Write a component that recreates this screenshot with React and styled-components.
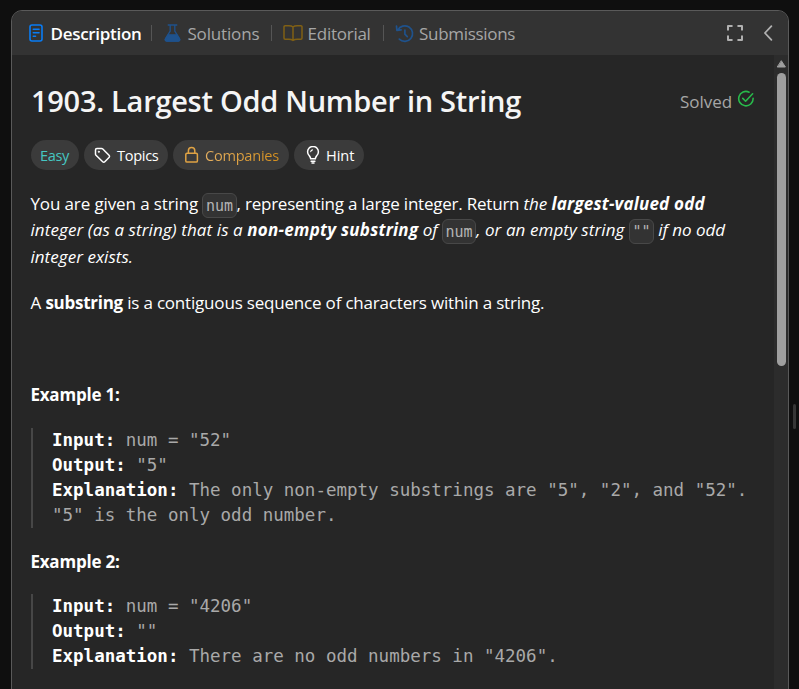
import React from 'react';
import styled, { createGlobalStyle } from 'styled-components';

const GlobalStyle = createGlobalStyle`
  * { box-sizing: border-box; }
  html, body { margin: 0; height: 689px; overflow: hidden; background: #0f0f0f; }
  body { font-family: "Open Sans", "Noto Sans", sans-serif; font-size: 17px; color: #fff; }
`;

const Page = styled.div`
  display: flex;
  width: 799px;
  height: 689px;
  padding: 10px 0 0 11px;
  overflow: hidden;
`;

const Panel = styled.section`
  display: flex;
  flex-direction: column;
  width: 778px;
  height: 700px;
  flex: none;
  border: 1px solid #5a5a5a;
  border-radius: 11px;
  background: #262626;
  overflow: hidden;
`;

const Header = styled.header`
  display: flex;
  align-items: center;
  flex: none;
  height: 44px;
  padding: 0 13px 0 15px;
  background: #333;
`;

const Tab = styled.div`
  display: flex;
  align-items: center;
  flex: none;
  width: ${(p) => p.$width}px;
  height: 44px;
  gap: ${(p) => p.$gap}px;
  color: ${(p) => (p.$active ? '#fff' : '#a6a6a6')};
  font-weight: ${(p) => (p.$active ? 600 : 400)};
  letter-spacing: ${(p) => p.$track}px;
  white-space: nowrap;
`;

const Divider = styled.span`
  flex: none;
  width: 1px;
  height: 16px;
  margin-right: ${(p) => p.$after}px;
  background: #555;
`;

const HeaderActions = styled.div`
  display: flex;
  align-items: center;
  gap: 19px;
  margin-left: auto;
`;

const Icon = styled.svg`
  display: block;
  flex: none;
  fill: none;
  stroke: currentColor;
  stroke-linecap: round;
  stroke-linejoin: round;
  color: ${(p) => p.$color || 'currentColor'};
`;

const Body = styled.div`
  display: flex;
  flex: 1;
  min-height: 0;
`;

const Content = styled.main`
  width: 762px;
  padding: 25px 19px 0 19px;
`;

const TitleRow = styled.div`
  display: flex;
  align-items: center;
  justify-content: space-between;
  height: 41px;
`;

const Title = styled.h1`
  margin: 0;
  color: #f5f5f5;
  font-size: 29px;
  font-weight: 600;
  line-height: 41px;
  letter-spacing: -0.28px;
  white-space: nowrap;
`;

const Status = styled.div`
  display: flex;
  align-items: center;
  gap: 5px;
  padding-top: 1px;
  color: #a6a6a6;
  letter-spacing: -0.05px;
`;

const StatusMark = styled.span`
  margin-bottom: 4px;
`;

const Pills = styled.div`
  display: flex;
  gap: 5px;
  margin-top: 19px;
`;

const Pill = styled.div`
  display: flex;
  align-items: center;
  width: ${(p) => p.$width}px;
  height: 30px;
  padding-left: ${(p) => p.$inset || 10}px;
  gap: ${(p) => p.$gap || 0}px;
  border-radius: 15px;
  background: #3b3b3b;
  color: ${(p) => p.$color || '#fff'};
  font-size: 14.6px;
  letter-spacing: ${(p) => p.$track || 0}px;
  white-space: nowrap;
`;

const GoldText = styled.span`
  background: linear-gradient(90deg, #e5b061, #d48f1d);
  background-clip: text;
  color: transparent;
`;

const Paragraph = styled.p`
  margin: ${(p) => p.$top}px 0 0 -0.6px;
  height: ${(p) => p.$height || 26}px;
  line-height: 26.25px;
  white-space: nowrap;
`;

const Run = styled.span`
  letter-spacing: ${(p) => p.$track}px;
  font-weight: ${(p) => (p.$bold ? 700 : 400)};
  font-style: ${(p) => (p.$italic ? 'italic' : 'normal')};
  white-space: pre;
`;

const Code = styled.code`
  display: inline-block;
  height: 25px;
  margin: -4px 0 -5px;
  padding: 0 2.5px;
  border: 1px solid #484848;
  border-radius: 6px;
  background: #333;
  color: #b3b3b3;
  font: 15px/24px "DejaVu Sans Mono", monospace;
  vertical-align: -1px;
`;

const Example = styled.div`
  margin: ${(p) => p.$top}px 0 0;
  padding-left: 19px;
  border-left: 2px solid #474747;
  color: #a9a9a9;
  font: 17.5px/25px "DejaVu Sans Mono", monospace;
`;

const Line = styled.div`
  height: 25px;
  white-space: pre;
`;

const Label = styled.strong`
  color: #fff;
  font-weight: 700;
`;

const Scrollbar = styled.div`
  display: flex;
  flex-direction: column;
  align-items: center;
  width: 14px;
  padding-top: 5px;
  background: #2c2c2c;
`;

const Thumb = styled.div`
  width: 9px;
  height: 293px;
  margin-top: 5px;
  border-radius: 5px;
  background: #9f9f9f;
`;

const ResizeHandle = styled.div`
  align-self: flex-start;
  width: 3px;
  height: 25px;
  margin: 394px 0 0 4px;
  border-radius: 2px;
  background: #363636;
`;

function Description() {
  return (
    <>
      <Paragraph $top={21} $height={79}>
        <Run $track={-0.115}>You are given a string </Run>
        <Code>num</Code>
        <Run $track={-0.223}>, representing a large integer. Return </Run>
        <Run $italic $track={-0.06}>the </Run>
        <Run $italic $bold $track={0.19}>largest-valued odd</Run>
        <br />
        <Run $italic $track={0.1}>integer (as a string) that is a </Run>
        <Run $italic $bold $track={0.25}>non-empty substring</Run>
        <Run $italic $track={0}> of </Run>
        <Code>num</Code>
        <Run $italic $track={0.08}>, or an empty string </Run>
        <Code>""</Code>
        <Run $italic $track={-0.04}> if no odd</Run>
        <br />
        <Run $italic $track={0.05}>integer exists.</Run>
      </Paragraph>
      <Paragraph $top={20}>
        <Run $track={-0.1}>A </Run>
        <Run $bold $track={-0.26}>substring</Run>
        <Run $track={-0.19}> is a contiguous sequence of characters within a string.</Run>
      </Paragraph>
    </>
  );
}

function ExampleLine({ label, children }) {
  return (
    <Line>
      {label && <Label>{label}</Label>}
      {children}
    </Line>
  );
}

export default function App() {
  return (
    <>
      <GlobalStyle />
      <Page>
        <Panel>
          <Header>
            <Tab $active $width={124} $gap={5.5} $track={-0.29}>
              <Icon width="18" height="18" viewBox="0 0 18 18" $color="#087cf5" strokeWidth="1.6">
                <rect x="3" y="1" width="12" height="16" rx="2" />
                <path d="M6.2 5.3h5.9M6.2 8.8h5.9M6.2 12.3h2.4" strokeWidth="1.4" />
              </Icon>
              Description
            </Tab>
            <Divider $after={12} />
            <Tab $width={107} $gap={6.4} $track={-0.15}>
              <Icon width="17" height="18" viewBox="0 0 17 18" $color="#1f528c" strokeWidth="1.3">
                <path d="M4.2 1h8.6M6.2 1v6.2L1.5 14.5c-.8 1.3 0 2.5 1.3 2.5h11.4c1.3 0 2.1-1.2 1.3-2.5L10.8 7.2V1" />
                <path d="M4.1 10.8h8.8l2.6 4.2c.6 1-.1 2-1.3 2H2.8c-1.2 0-1.9-1-1.3-2z" fill="currentColor" />
              </Icon>
              Solutions
            </Tab>
            <Divider $after={11} />
            <Tab $width={100} $gap={4.6} $track={-0.26}>
              <Icon width="20" height="18" viewBox="0 0 20 18" $color="#806015" strokeWidth="1.5">
                <path d="M10 3v12.2M10 3C8.8 2 7.4 1.8 5.8 1.8H2.1A1.1 1.1 0 0 0 1 2.9v11.2c0 .6.5 1.1 1.1 1.1h3.7c1.8 0 2.8.2 4.2 1.2 1.4-1 2.4-1.2 4.2-1.2h3.7c.6 0 1.1-.5 1.1-1.1V2.9c0-.6-.5-1.1-1.1-1.1h-3.7C12.6 1.8 11.2 2 10 3z" />
              </Icon>
              Editorial
            </Tab>
            <Divider $after={11} />
            <Tab $width={123} $gap={5} $track={-0.3}>
              <Icon width="19" height="19" viewBox="0 0 19 19" $color="#1f528c" strokeWidth="1.7">
                <path d="M2.8 6.1A7.8 7.8 0 1 1 4.3 15.2M1.5 2.1l.4 4.2 4.2-.4M9.9 6v4.2l2.4 2.4" />
              </Icon>
              Submissions
            </Tab>
            <HeaderActions>
              <Icon width="18" height="18" viewBox="0 0 18 18" $color="#b0b0b0" strokeWidth="2" strokeLinejoin="miter">
                <path d="M2 5.8V2h3.8M12.2 2H16v3.8M16 12.2V16h-3.8M5.8 16H2v-3.8" />
              </Icon>
              <Icon width="12" height="18" viewBox="0 0 12 18" $color="#b0b0b0" strokeWidth="1.8">
                <path d="M8.4 2.2 1.9 9 8.4 15.8" />
              </Icon>
            </HeaderActions>
          </Header>
          <Body>
            <Content>
              <TitleRow>
                <Title>1903. Largest Odd Number in String</Title>
                <Status>
                  Solved
                  <StatusMark>
                    <Icon width="18" height="18" viewBox="0 0 18 18" $color="#28b94b" strokeWidth="1.6">
                      <path d="M12.1 2.2A7.2 7.2 0 1 0 16.1 8.4M5.8 8.4l2.8 2.8 7-7.4" />
                    </Icon>
                  </StatusMark>
                </Status>
              </TitleRow>
              <Pills>
                <Pill $width={48} $inset={9} $color="#46c6c2" $track={-0.37}>Easy</Pill>
                <Pill $width={84} $gap={6} $track={-0.32}>
                  <Icon width="17" height="17" viewBox="0 0 17 17" strokeWidth="1.5">
                    <path d="M1.5 2.9c0-.8.6-1.4 1.4-1.4h4.6c.5 0 1 .2 1.3.5l6.2 6.3c.7.7.7 1.5 0 2.2l-4.2 4.3c-.6.6-1.5.6-2.1 0L2 8.3c-.3-.3-.5-.8-.5-1.3z" />
                    <circle cx="4.8" cy="4.8" r=".7" fill="currentColor" strokeWidth=".6" />
                  </Icon>
                  Topics
                </Pill>
                <Pill $width={116} $gap={5} $track={-0.26}>
                  <Icon width="17" height="18" viewBox="0 0 17 18" $color="#e0a344" strokeWidth="1.5">
                    <rect x="2.8" y="7.3" width="11.6" height="8.8" rx="1.2" />
                    <path d="M5.4 7V4.8a3.2 3.2 0 0 1 6.4 0V7" />
                  </Icon>
                  <GoldText>Companies</GoldText>
                </Pill>
                <Pill $width={70} $gap={4} $track={-0.05}>
                  <Icon width="18" height="18" viewBox="0 0 18 18" strokeWidth="1.5">
                    <path d="M6.7 12.8c-.2-1.4-.7-2-1.4-3A5.4 5.4 0 1 1 12.7 9.8c-.7 1-1.2 1.6-1.4 3zM7.1 15.2h3.8M8 17h2" />
                    <path d="M6.7 5.7c.2-.9.9-1.6 1.8-1.8" strokeWidth="1.1" />
                  </Icon>
                  Hint
                </Pill>
              </Pills>
              <Description />
              <Paragraph $top={66}>
                <Run $bold $track={-0.2}>Example 1:</Run>
              </Paragraph>
              <Example $top={20}>
                <ExampleLine label="Input:">{' num = "52"'}</ExampleLine>
                <ExampleLine label="Output:">{' "5"'}</ExampleLine>
                <ExampleLine label="Explanation:">
                  {' The only non-empty substrings are "5", "2", and "52".'}
                </ExampleLine>
                <ExampleLine>{'"5" is the only odd number.'}</ExampleLine>
              </Example>
              <Paragraph $top={21}>
                <Run $bold $track={-0.2}>Example 2:</Run>
              </Paragraph>
              <Example $top={19}>
                <ExampleLine label="Input:">{' num = "4206"'}</ExampleLine>
                <ExampleLine label="Output:">{' ""'}</ExampleLine>
                <ExampleLine label="Explanation:">
                  {' There are no odd numbers in "4206".'}
                </ExampleLine>
              </Example>
            </Content>
            <Scrollbar>
              <Icon width="9" height="8" viewBox="0 0 9 8" $color="#9f9f9f" strokeWidth="1">
                <path d="M4.5 1 8.4 7H.6z" fill="currentColor" />
              </Icon>
              <Thumb />
            </Scrollbar>
          </Body>
        </Panel>
        <ResizeHandle />
      </Page>
    </>
  );
}
